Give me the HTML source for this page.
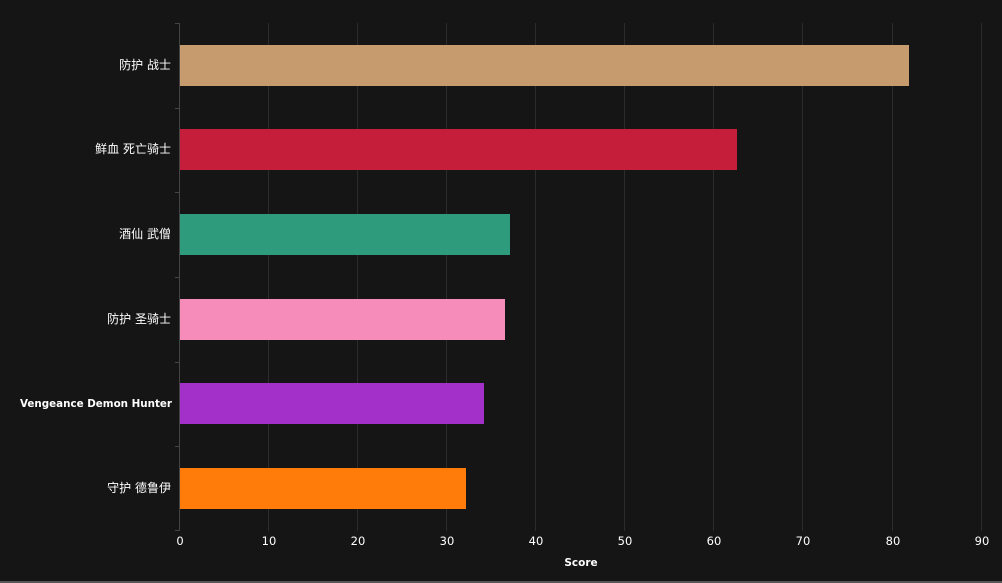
<!DOCTYPE html>
<html><head><meta charset="utf-8"><style>
html,body{margin:0;padding:0;background:#151515;}
svg{display:block}
text{font-family:"DejaVu Sans","Noto Sans CJK SC",sans-serif;fill:#fff;}
</style></head><body>
<svg width="1002" height="583" viewBox="0 0 1002 583">
<rect width="1002" height="583" fill="#151515"/>
<g stroke="#2c2c2c" stroke-width="1">
<line x1="268.5" y1="23" x2="268.5" y2="531"/>
<line x1="357.5" y1="23" x2="357.5" y2="531"/>
<line x1="446.5" y1="23" x2="446.5" y2="531"/>
<line x1="535.5" y1="23" x2="535.5" y2="531"/>
<line x1="624.5" y1="23" x2="624.5" y2="531"/>
<line x1="713.5" y1="23" x2="713.5" y2="531"/>
<line x1="802.5" y1="23" x2="802.5" y2="531"/>
<line x1="892.5" y1="23" x2="892.5" y2="531"/>
<line x1="981.5" y1="23" x2="981.5" y2="531"/>
</g>
<g stroke="#444" stroke-width="1">
<line x1="179.5" y1="23" x2="179.5" y2="531"/>
<line x1="175" y1="23.5" x2="179" y2="23.5"/>
<line x1="175" y1="108.5" x2="179" y2="108.5"/>
<line x1="175" y1="192.5" x2="179" y2="192.5"/>
<line x1="175" y1="277.5" x2="179" y2="277.5"/>
<line x1="175" y1="362.5" x2="179" y2="362.5"/>
<line x1="175" y1="446.5" x2="179" y2="446.5"/>
<line x1="175" y1="530.5" x2="179" y2="530.5"/>
</g>
<rect x="180" y="45" width="729" height="41" fill="#c69b6d"/>
<rect x="180" y="129" width="557" height="41" fill="#c41e3a"/>
<rect x="180" y="214" width="330" height="41" fill="#2e9c7c"/>
<rect x="180" y="299" width="325" height="41" fill="#f58cba"/>
<rect x="180" y="383" width="304" height="41" fill="#a330c9"/>
<rect x="180" y="468" width="286" height="41" fill="#ff7c0a"/>
<g font-size="12" text-anchor="end">
<text x="171" y="69">防护 战士</text>
<text x="171" y="153">鲜血 死亡骑士</text>
<text x="171" y="238">酒仙 武僧</text>
<text x="171" y="323">防护 圣骑士</text>
<text x="172" y="407" font-size="11" font-weight="bold" textLength="152" lengthAdjust="spacingAndGlyphs">Vengeance Demon Hunter</text>
<text x="171" y="492">守护 德鲁伊</text>
</g>
<g font-size="11.5" text-anchor="middle">
<text x="180" y="545">0</text>
<text x="269" y="545">10</text>
<text x="358" y="545">20</text>
<text x="447" y="545">30</text>
<text x="536" y="545">40</text>
<text x="625" y="545">50</text>
<text x="714" y="545">60</text>
<text x="803" y="545">70</text>
<text x="893" y="545">80</text>
<text x="982" y="545">90</text>
<text x="581" y="566" font-size="10.5" font-weight="bold">Score</text>
</g>
<rect x="0" y="581" width="1002" height="2" fill="#555"/>
</svg>
</body></html>
